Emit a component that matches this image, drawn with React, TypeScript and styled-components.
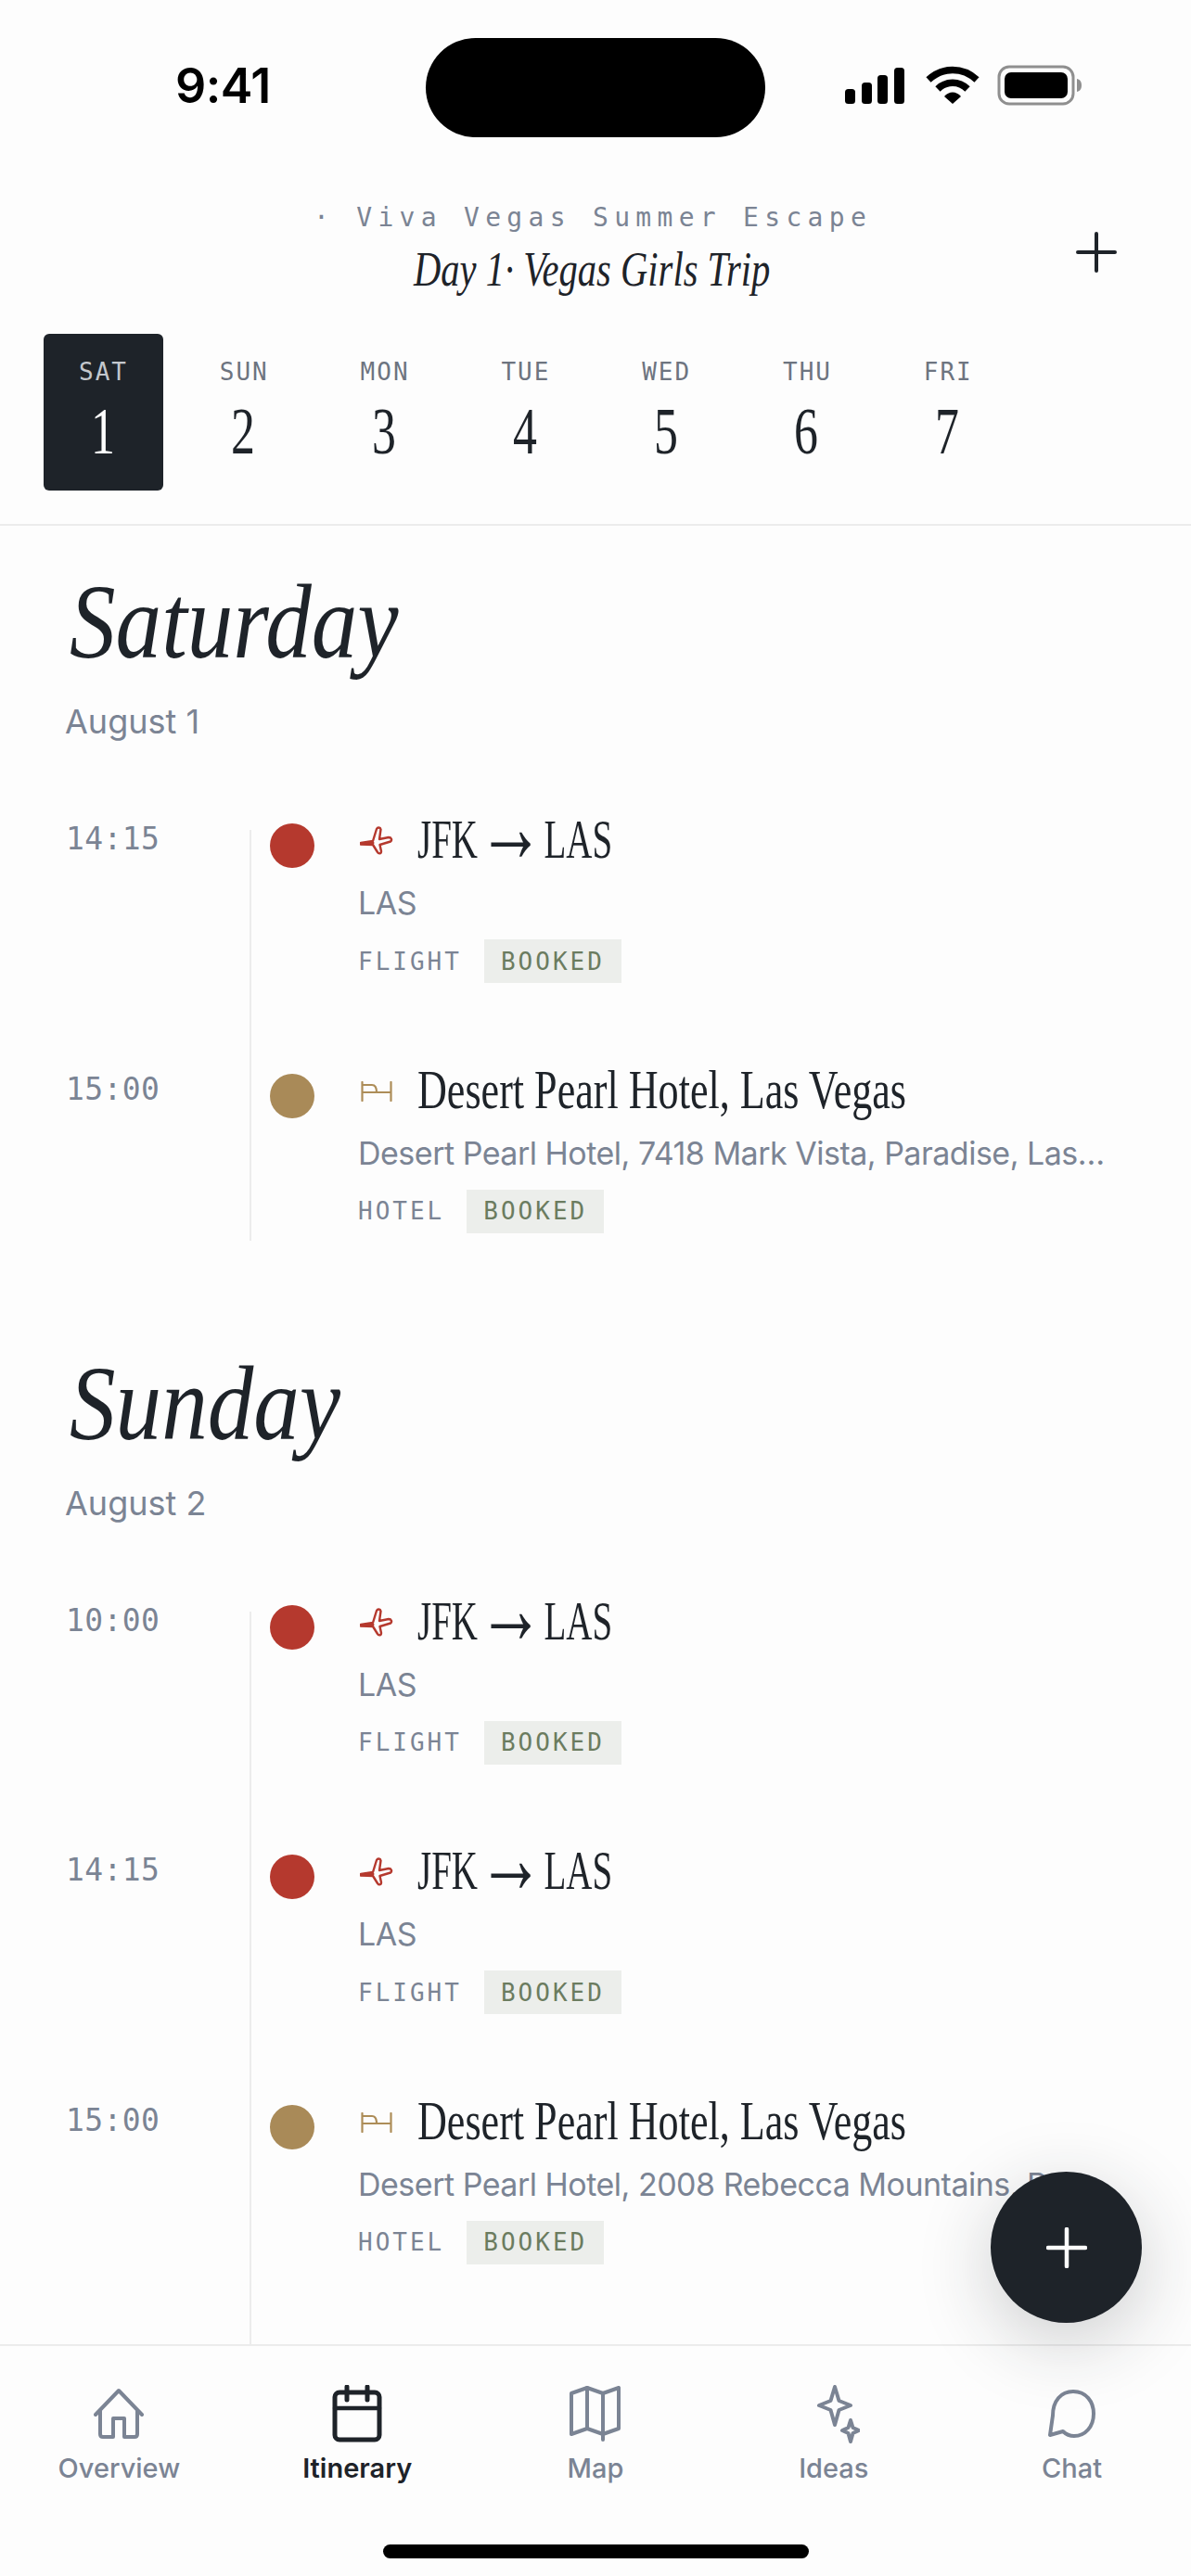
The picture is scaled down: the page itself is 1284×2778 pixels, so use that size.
import { createGlobalStyle } from "styled-components";
import styled from "styled-components";

const INK = "#1e2329";
const GREY = "#7b8494";
const SANS = `Inter, "Noto Sans", sans-serif`;
const MONO = `"DejaVu Sans Mono", "Liberation Mono", monospace`;
const SERIF = `"Liberation Serif", serif`;

const GlobalStyle = createGlobalStyle`
  html, body {
    margin: 0;
    padding: 0;
    background: #fdfdfd;
  }
`;

const Screen = styled.div`
  position: relative;
  width: 1284px;
  height: 2778px;
  background: #fdfdfd;
  overflow: hidden;
  display: flex;
  flex-direction: column;
  font-family: ${SANS};
`;

const StatusBar = styled.div`
  height: 148px;
  flex: none;
  display: grid;
  grid-template-columns: 459px 366px 1fr;
  padding-top: 41px;
  box-sizing: border-box;
`;

const Clock = styled.div`
  font-size: 52px;
  font-weight: 600;
  color: #000;
  line-height: 104px;
  padding-left: 189px;
  letter-spacing: -0.5px;
`;

const Island = styled.div`
  height: 107px;
  border-radius: 54px;
  background: #000;
`;

const StatusIcons = styled.div`
  display: flex;
  align-items: center;
  padding-left: 85px;
  height: 102px;
`;

const TopHeader = styled.header`
  position: relative;
  flex: none;
  box-sizing: border-box;
  border-bottom: 2px solid #ececec;
  padding-bottom: 36px;
  display: flex;
  flex-direction: column;
`;

const TitleBlock = styled.div`
  display: flex;
  flex-direction: column;
  align-items: center;
  padding-top: 70px;
`;

const TripName = styled.div`
  font-family: ${MONO};
  font-size: 28px;
  letter-spacing: 6.3px;
  line-height: 34px;
  color: ${GREY};
  margin-left: -6px;
  white-space: nowrap;
`;

const Condensed = styled.span<{ $x?: number }>`
  display: inline-block;
  white-space: nowrap;
  transform: scaleX(${(p) => p.$x ?? 0.8});
  transform-origin: left center;
`;

const DayTitle = styled.div`
  font-family: ${SERIF};
  font-style: italic;
  font-size: 52px;
  line-height: 60px;
  color: ${INK};
  width: 384px;
  margin-top: 9px;
  margin-left: -8px;
`;

const AddButton = styled.div`
  position: absolute;
  left: 1160px;
  top: 102px;
  width: 44px;
  height: 44px;
`;

const DayStrip = styled.div`
  display: flex;
  margin-top: 39px;
  padding-left: 47px;
`;

const DayCell = styled.div<{ $active?: boolean }>`
  width: 129px;
  height: 169px;
  margin-right: 22.8px;
  box-sizing: border-box;
  border-radius: 6px;
  background: ${(p) => (p.$active ? INK : "transparent")};
  display: flex;
  flex-direction: column;
  align-items: center;
  padding-top: 27px;
`;

const DayName = styled.div<{ $active?: boolean }>`
  font-family: ${MONO};
  font-size: 26px;
  line-height: 28px;
  letter-spacing: 2px;
  color: ${(p) => (p.$active ? "#c3c7cd" : "#6d7480")};
`;

const DayNum = styled.div<{ $active?: boolean }>`
  font-family: ${SERIF};
  font-size: 72px;
  line-height: 70px;
  margin-top: 15px;
  width: 28px;
  color: ${(p) => (p.$active ? "#fdfdfd" : INK)};
`;

const Scroll = styled.main`
  flex: 1;
  min-height: 0;
  overflow: hidden;
  padding-top: 41px;
`;

const DaySection = styled.section`
  margin-bottom: 113px;
`;

const DayHeading = styled.h2`
  margin: 0;
  padding-left: 75px;
  font-family: ${SERIF};
  font-style: italic;
  font-weight: 400;
  font-size: 114px;
  line-height: 125px;
  color: ${INK};
`;

const DayDate = styled.div`
  margin-top: 23px;
  padding-left: 70px;
  font-size: 36px;
  line-height: 44px;
  color: ${GREY};
`;

const Timeline = styled.div`
  margin-top: 95px;
`;

const Row = styled.div`
  display: grid;
  grid-template-columns: 269px 1fr;
`;

const Time = styled.div`
  margin-top: -8px;
  padding-left: 71px;
  font-family: ${MONO};
  font-size: 33px;
  line-height: 36px;
  letter-spacing: 0.4px;
  color: ${GREY};
`;

const Track = styled.div<{ $tail: number }>`
  position: relative;
  border-left: 2px solid #ececec;
  padding-left: 115px;
  padding-bottom: ${(p) => p.$tail}px;
  min-width: 0;
`;

const Dot = styled.span<{ $color: string }>`
  position: absolute;
  left: 20px;
  top: -7px;
  width: 48px;
  height: 48px;
  border-radius: 50%;
  background: ${(p) => p.$color};
`;

const EventTitle = styled.div`
  display: flex;
  align-items: center;
  height: 50px;
  margin-top: -15px;
  font-family: ${SERIF};
  font-size: 60px;
  line-height: 50px;
  color: ${INK};
`;

const TitleIcon = styled.span`
  flex: none;
  width: 64px;
  box-sizing: border-box;
  padding-top: 4px;
  display: flex;
`;

const Route = styled.span`
  word-spacing: -15px;
`;

const Arrow = styled.span`
  font-size: 110px;
  line-height: 0;
  vertical-align: -4px;
`;

const Address = styled.div`
  margin-top: 22px;
  width: 812px;
  font-size: 34px;
  line-height: 44px;
  letter-spacing: -0.5px;
  color: ${GREY};
  white-space: nowrap;
  overflow: hidden;
  text-overflow: ellipsis;
`;

const Meta = styled.div`
  display: flex;
  align-items: center;
  gap: 24px;
  margin-top: 17px;
`;

const Kind = styled.span`
  font-family: ${MONO};
  font-size: 26px;
  letter-spacing: 3px;
  color: ${GREY};
`;

const Status = styled.span`
  height: 47px;
  width: 148px;
  display: flex;
  align-items: center;
  justify-content: center;
  background: #eceeeb;
  font-family: ${MONO};
  font-size: 26px;
  letter-spacing: 3px;
  color: #6b7c5f;
`;

const Fab = styled.button`
  position: absolute;
  left: 1068px;
  top: 2342px;
  width: 163px;
  height: 163px;
  border: 0;
  padding: 0;
  border-radius: 50%;
  background: ${INK};
  box-shadow: 0 20px 80px rgba(30, 35, 41, 0.22);
  display: flex;
  align-items: center;
  justify-content: center;
`;

const BottomNav = styled.nav`
  flex: none;
  position: relative;
  height: 250px;
  box-sizing: border-box;
  border-top: 2px solid #ececec;
  background: #fdfdfd;
  display: grid;
  grid-template-columns: repeat(5, 1fr);
  padding-top: 39px;
`;

const NavItem = styled.div<{ $active?: boolean }>`
  display: flex;
  flex-direction: column;
  align-items: center;
  color: ${(p) => (p.$active ? INK : GREY)};
  font-size: 29px;
  font-weight: ${(p) => (p.$active ? 600 : 500)};
  line-height: 36px;
  gap: 7px;
`;

const NavIconBox = styled.div`
  width: 64px;
  height: 68px;
  display: flex;
  align-items: center;
  justify-content: center;
`;

const HomeBar = styled.div`
  position: absolute;
  left: 413px;
  top: 214px;
  width: 459px;
  height: 15px;
  border-radius: 8px;
  background: #000;
`;

const SignalIcon = () => (
  <svg width="66" height="40" viewBox="0 0 66 40">
    <rect x="1" y="24" width="11" height="16" rx="3.5" fill="#000" />
    <rect x="19" y="17" width="11" height="23" rx="3.5" fill="#000" />
    <rect x="36" y="9" width="11" height="31" rx="3.5" fill="#000" />
    <rect x="54" y="1" width="11" height="39" rx="3.5" fill="#000" />
  </svg>
);

const WifiIcon = () => (
  <svg width="58" height="42" viewBox="0 0 58 42" style={{ marginLeft: 22 }}>
    <path d="M3 15 C18 1 40 1 55 15" fill="none" stroke="#000" strokeWidth="7.5" />
    <path d="M13 25 C22 16 36 16 45 25" fill="none" stroke="#000" strokeWidth="7.5" />
    <path d="M20 33 C25 27 33 27 38 33 L29 41 Z" fill="#000" />
  </svg>
);

const BatteryIcon = () => (
  <svg width="92" height="44" viewBox="0 0 92 44" style={{ marginLeft: 19 }}>
    <rect x="2" y="2" width="80" height="40" rx="11" fill="none" stroke="#8f8f8f" strokeWidth="3" />
    <rect x="8" y="8" width="68" height="28" rx="7" fill="#000" />
    <path d="M86 15 C90 16 91 19 91 22 C91 25 90 28 86 29 Z" fill="#8f8f8f" />
  </svg>
);

const PlusIcon = ({ size, color, width }: { size: number; color: string; width: number }) => (
  <svg width={size} height={size} viewBox="0 0 44 44">
    <path
      d="M22 2V42M2 22H42"
      stroke={color}
      strokeWidth={width}
      strokeLinecap="round"
      fill="none"
    />
  </svg>
);

const PlaneIcon = () => (
  <svg width="38" height="32" viewBox="0 0 38 32" fill="none" style={{ marginLeft: 2 }}>
    <path
      d="M1 18 L14 16 L18 3 C19 1 22 1 22.5 3.5 L21 14 L31 12 C34 12 35 15 33 16.5 L21.5 20 L23 27 C23 30 20 30 19 28 L14 20 L1 19.5 Z"
      stroke="#b5392e"
      strokeWidth="2.4"
      strokeLinejoin="round"
    />
    <path d="M1 18.8 L14 18" stroke="#b5392e" strokeWidth="3" strokeLinecap="round" />
  </svg>
);

const BedIcon = () => (
  <svg
    width="34"
    height="22"
    viewBox="0 0 34 22"
    fill="none"
    stroke="#ad8d58"
    strokeWidth="2.2"
    strokeLinecap="round"
    style={{ marginLeft: 3 }}
  >
    <path d="M1.5 1V21M32.5 1V21M1.5 12H32.5M1.5 4H12C15 4 17 7 17 12" />
  </svg>
);

const HomeNavIcon = () => (
  <svg width="54" height="56" viewBox="0 0 54 56" fill="none" stroke="currentColor" strokeWidth="4" strokeLinecap="round" strokeLinejoin="round">
    <path d="M2 29 L27 3 L52 29" />
    <path d="M7 25 V50 C7 52 8 53 10 53 H21 V33 H33 V53 H44 C46 53 47 52 47 50 V25" />
  </svg>
);

const CalendarNavIcon = () => (
  <svg width="54" height="62" viewBox="0 0 54 62" fill="none" stroke="currentColor" strokeWidth="5" strokeLinecap="round" strokeLinejoin="round">
    <rect x="3" y="8" width="48" height="51" rx="5" />
    <path d="M3 25 H51" strokeWidth="4.5" />
    <path d="M16 2 V16 M38 2 V16" />
  </svg>
);

const MapNavIcon = () => (
  <svg width="55" height="60" viewBox="0 0 55 60" fill="none" stroke="currentColor" strokeWidth="4" strokeLinecap="round" strokeLinejoin="round">
    <path d="M2 8 L19 2 L36 8 L53 2 V46 L36 52 L19 46 L2 52 Z" />
    <path d="M19 2 V46 M36 8 V58" />
  </svg>
);

const IdeasNavIcon = () => (
  <svg width="46" height="63" viewBox="0 0 46 63" fill="none" stroke="currentColor" strokeWidth="4" strokeLinejoin="round" style={{ marginLeft: 10 }}>
    <path d="M19 2 L23.5 17 L36 22 L23.5 27 L19 43 L14.5 27 L2 22 L14.5 17 Z" />
    <path d="M36 38 L38.5 46 L45 49 L38.5 52 L36 61 L33.5 52 L27 49 L33.5 46 Z" />
  </svg>
);

const ChatNavIcon = () => (
  <svg width="54" height="56" viewBox="0 0 54 56" fill="none" stroke="currentColor" strokeWidth="4" strokeLinecap="round" strokeLinejoin="round">
    <path d="M6 30 C6 14 15 4 28 4 C42 4 50 15 50 28 C50 42 41 52 29 52 C23 52 19 49 17 47 L3 51 L6 30 Z" />
  </svg>
);

type TripEvent = {
  time: string;
  kind: "flight" | "hotel";
  title: string;
  address: string;
};

const days: { name: string; date: string; tail: number; events: TripEvent[] }[] = [
  {
    name: "Saturday",
    date: "August 1",
    tail: 8,
    events: [
      { time: "14:15", kind: "flight", title: "JFK → LAS", address: "LAS" },
      {
        time: "15:00",
        kind: "hotel",
        title: "Desert Pearl Hotel, Las Vegas",
        address: "Desert Pearl Hotel, 7418 Mark Vista, Paradise, Las Vegas, NV",
      },
    ],
  },
  {
    name: "Sunday",
    date: "August 2",
    tail: 90,
    events: [
      { time: "10:00", kind: "flight", title: "JFK → LAS", address: "LAS" },
      { time: "14:15", kind: "flight", title: "JFK → LAS", address: "LAS" },
      {
        time: "15:00",
        kind: "hotel",
        title: "Desert Pearl Hotel, Las Vegas",
        address: "Desert Pearl Hotel, 2008 Rebecca Mountains, Paradise, Las Vegas, NV",
      },
    ],
  },
];

const strip = [
  ["SAT", "1"],
  ["SUN", "2"],
  ["MON", "3"],
  ["TUE", "4"],
  ["WED", "5"],
  ["THU", "6"],
  ["FRI", "7"],
];

const navItems = [
  { label: "Overview", icon: <HomeNavIcon /> },
  { label: "Itinerary", icon: <CalendarNavIcon />, active: true },
  { label: "Map", icon: <MapNavIcon /> },
  { label: "Ideas", icon: <IdeasNavIcon /> },
  { label: "Chat", icon: <ChatNavIcon /> },
];

const renderTitle = (title: string) => {
  const parts = title.split("→");
  if (parts.length === 1) return title;
  return (
    <Route>
      {parts[0]}
      <Arrow>→</Arrow>
      {parts[1]}
    </Route>
  );
};

const App = () => {
  return (
    <Screen>
      <GlobalStyle />
      <StatusBar>
        <Clock>9:41</Clock>
        <Island />
        <StatusIcons>
          <SignalIcon />
          <WifiIcon />
          <BatteryIcon />
        </StatusIcons>
      </StatusBar>

      <TopHeader>
        <TitleBlock>
          <TripName>· Viva Vegas Summer Escape</TripName>
          <DayTitle>
            <Condensed $x={0.78}>Day 1· Vegas Girls Trip</Condensed>
          </DayTitle>
        </TitleBlock>
        <AddButton>
          <PlusIcon size={44} color={INK} width={4} />
        </AddButton>
        <DayStrip>
          {strip.map(([name, num], i) => (
            <DayCell key={name} $active={i === 0}>
              <DayName $active={i === 0}>{name}</DayName>
              <DayNum $active={i === 0}>
                <Condensed $x={0.72}>{num}</Condensed>
              </DayNum>
            </DayCell>
          ))}
        </DayStrip>
      </TopHeader>

      <Scroll>
        {days.map((day) => (
          <DaySection key={day.name}>
            <DayHeading>
              <Condensed $x={0.87}>{day.name}</Condensed>
            </DayHeading>
            <DayDate>{day.date}</DayDate>
            <Timeline>
              {day.events.map((ev, i) => (
                <Row key={ev.time + i}>
                  <Time>{ev.time}</Time>
                  <Track $tail={i === day.events.length - 1 ? day.tail : 104.5}>
                    <Dot $color={ev.kind === "flight" ? "#b5392e" : "#a98a58"} />
                    <EventTitle>
                      <TitleIcon>{ev.kind === "flight" ? <PlaneIcon /> : <BedIcon />}</TitleIcon>
                      <Condensed $x={ev.kind === "flight" ? 0.65 : 0.735}>
                        {renderTitle(ev.title)}
                      </Condensed>
                    </EventTitle>
                    <Address>{ev.address}</Address>
                    <Meta>
                      <Kind>{ev.kind.toUpperCase()}</Kind>
                      <Status>BOOKED</Status>
                    </Meta>
                  </Track>
                </Row>
              ))}
            </Timeline>
          </DaySection>
        ))}
      </Scroll>

      <BottomNav>
        {navItems.map((item) => (
          <NavItem key={item.label} $active={item.active}>
            <NavIconBox>{item.icon}</NavIconBox>
            {item.label}
          </NavItem>
        ))}
        <HomeBar />
      </BottomNav>

      <Fab>
        <PlusIcon size={44} color="#fdfdfd" width={4.5} />
      </Fab>
    </Screen>
  );
};

export default App;
